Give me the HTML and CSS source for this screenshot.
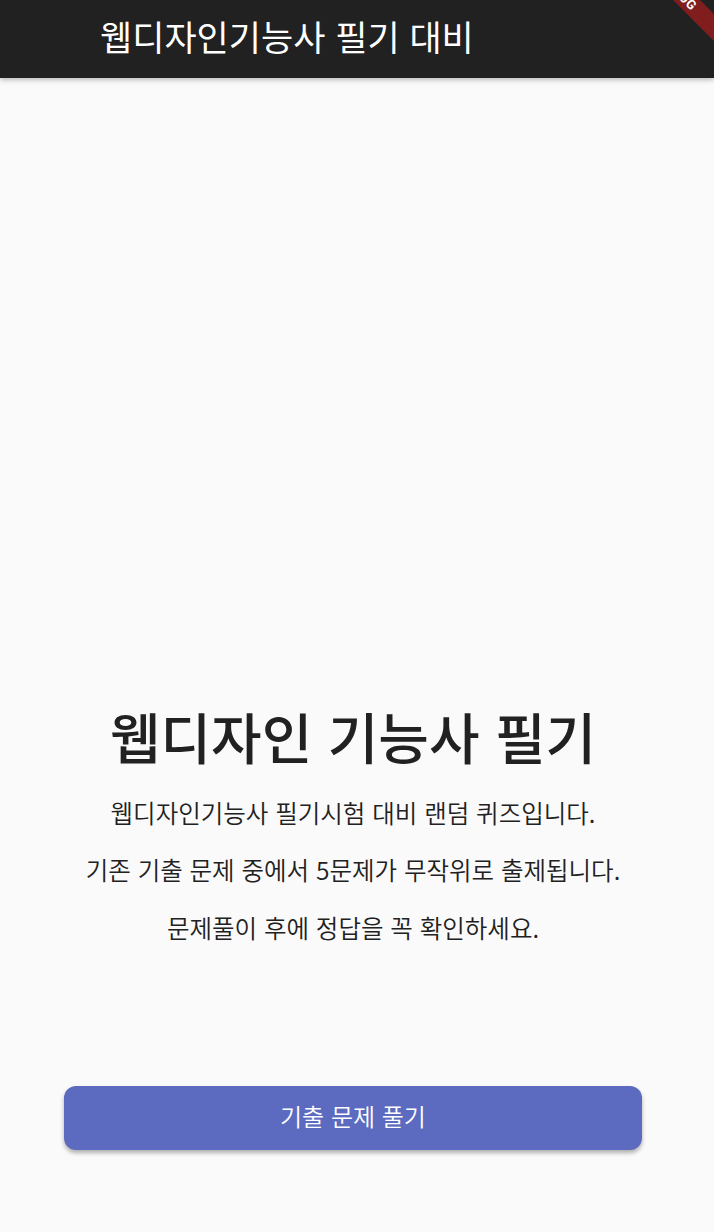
FILE: index.html
```html
<!DOCTYPE html>
<html lang="ko">
<head>
<meta charset="utf-8">
<title>웹디자인기능사 필기 대비</title>
<link rel="stylesheet" href="styles.css">
</head>
<body>
<header class="app-bar">
  <h1 class="app-title">웹디자인기능사 필기 대비</h1>
  <div class="debug-banner">DEBUG</div>
</header>
<main class="page">
  <section class="intro">
    <h2 class="headline">웹디자인 기능사 필기</h2>
    <p class="line">웹디자인기능사 필기시험 대비 랜덤 퀴즈입니다.</p>
    <p class="line">기존 기출 문제 중에서 5문제가 무작위로 출제됩니다.</p>
    <p class="line">문제풀이 후에 정답을 꼭 확인하세요.</p>
  </section>
  <button class="start-btn" type="button">기출 문제 풀기</button>
</main>
</body>
</html>
```
FILE: styles.css
```css
* { box-sizing: border-box; }
html, body { margin: 0; padding: 0; }
body {
  width: 714px;
  height: 1232px;
  overflow: hidden;
  background: #fafafa;
  font-family: "Noto Sans CJK KR", Roboto, sans-serif;
  color: #212121;
}
.app-bar {
  position: relative;
  height: 78px;
  background: #212121;
  display: flex;
  align-items: center;
  padding: 0 0 7px 100px;
  box-shadow: 0 2px 5px rgba(0,0,0,0.25);
  overflow: hidden;
  z-index: 1;
}
.app-title {
  margin: 0;
  font-size: 35px;
  font-weight: 400;
  color: #ffffff;
  line-height: 1;
}
.debug-banner {
  position: absolute;
  left: 619px;
  top: -17px;
  width: 120px;
  height: 19px;
  line-height: 19px;
  transform: rotate(45deg);
  background: rgba(183, 28, 28, 0.63);
  color: #fff;
  font-family: Roboto, sans-serif;
  font-weight: 700;
  font-size: 13px;
  text-align: center;
  letter-spacing: 0.5px;
}
.page {
  height: 1154px;
  display: flex;
  flex-direction: column;
  align-items: center;
  padding: 0 72px 82px 64px;
}
.intro {
  margin-top: auto;
  display: flex;
  flex-direction: column;
  align-items: center;
  text-align: center;
}
.headline {
  margin: 0 0 16px;
  font-size: 55px;
  font-weight: 500;
  line-height: 1.2;
  color: #212121;
}
.line {
  margin: 0;
  font-size: 24.5px;
  font-weight: 350;
  line-height: 57.5px;
  color: #212121;
  white-space: nowrap;
}
.start-btn {
  margin-top: 130px;
  width: 578px;
  height: 64px;
  flex: none;
  border: none;
  border-radius: 12px;
  background: #5c6bc0;
  color: #fff;
  font-family: "Noto Sans CJK KR", Roboto, sans-serif;
  font-size: 24px;
  font-weight: 350;
  padding: 0 0 5px;
  box-shadow: 0 3px 4px rgba(0,0,0,0.3);
}
```
